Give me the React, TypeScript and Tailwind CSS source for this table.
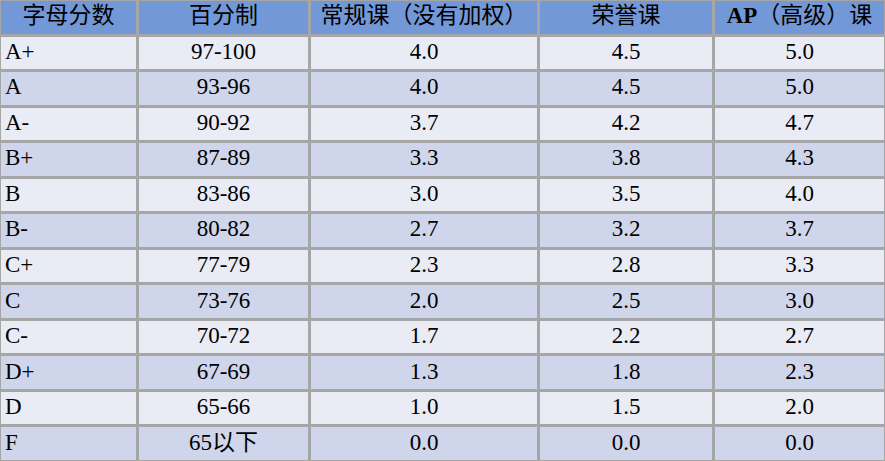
const rows: string[][] = [
  ['A+', '97-100', '4.0', '4.5', '5.0'],
  ['A', '93-96', '4.0', '4.5', '5.0'],
  ['A-', '90-92', '3.7', '4.2', '4.7'],
  ['B+', '87-89', '3.3', '3.8', '4.3'],
  ['B', '83-86', '3.0', '3.5', '4.0'],
  ['B-', '80-82', '2.7', '3.2', '3.7'],
  ['C+', '77-79', '2.3', '2.8', '3.3'],
  ['C', '73-76', '2.0', '2.5', '3.0'],
  ['C-', '70-72', '1.7', '2.2', '2.7'],
  ['D+', '67-69', '1.3', '1.8', '2.3'],
  ['D', '65-66', '1.0', '1.5', '2.0'],
  ['F', '65以下', '0.0', '0.0', '0.0'],
]

export default function App() {
  return (
    <div
      className="grid h-[461px] w-[885px] grid-cols-[135px_169px_226px_172px_1fr] grid-rows-[repeat(13,1fr)] gap-[3px] overflow-hidden bg-[#a6a6a6] p-px text-[23px] leading-none text-black"
      style={{ fontFamily: '"Liberation Serif", "Noto Sans CJK SC", serif' }}
    >
      {/* header */}
      <div className="flex items-center justify-center bg-[#7398d7] pb-[3px]">字母分数</div>
      <div className="flex items-center justify-center bg-[#7398d7] pb-[3px]">百分制</div>
      <div className="flex items-center justify-center bg-[#7398d7] pb-[3px]">常规课（没有加权）</div>
      <div className="flex items-center justify-center bg-[#7398d7] pb-[3px]">荣誉课</div>
      <div className="flex items-center justify-center bg-[#7398d7] pb-[3px]">
        <span className="font-bold">AP</span>（高级）课
      </div>

      {rows.map((row, i) =>
        row.map((cell, j) => (
          <div
            key={`${i}-${j}`}
            className={
              (i % 2 === 0 ? 'bg-[#e9ebf5] ' : 'bg-[#cfd5ea] ') +
              (j === 0 ? 'flex items-center pb-[3px] pl-[4px]' : 'flex items-center justify-center pb-[3px]')
            }
          >
            {cell}
          </div>
        )),
      )}
    </div>
  )
}
